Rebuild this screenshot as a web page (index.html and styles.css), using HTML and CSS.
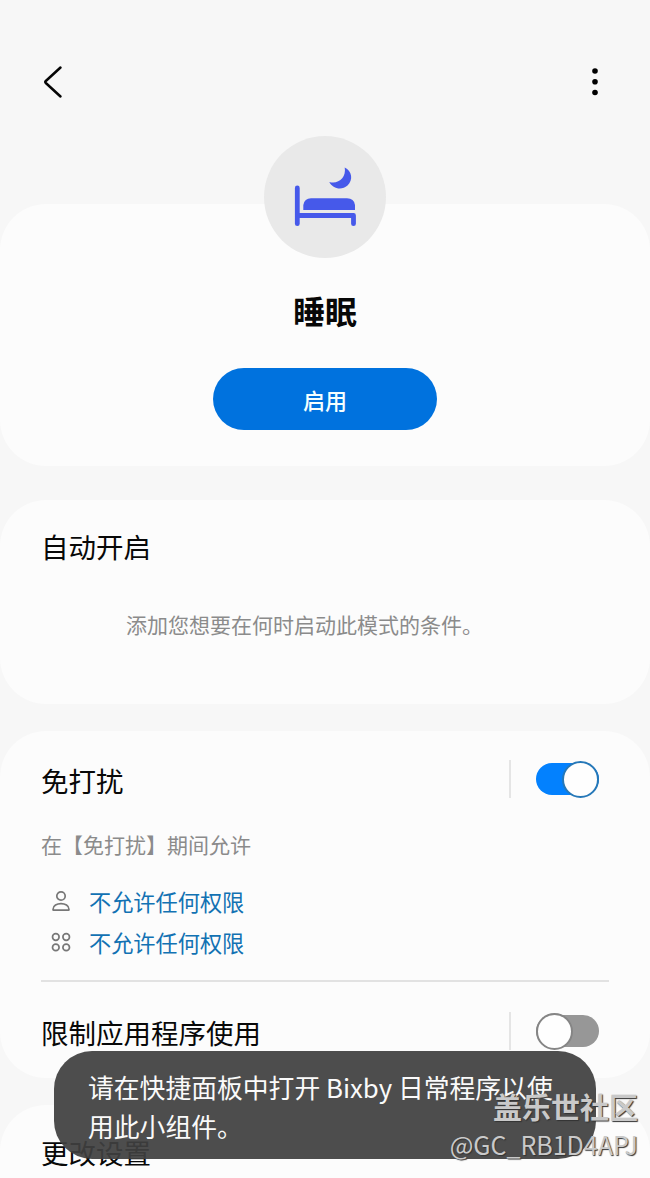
FILE: index.html
```html
<!DOCTYPE html>
<html lang="zh-CN">
<head>
<meta charset="utf-8">
<title>睡眠</title>
<link rel="stylesheet" href="styles.css">
</head>
<body>
<div class="screen">
  <header class="topbar">
    <svg class="back" width="24" height="36" viewBox="0 0 24 36"><path d="M18.500 3.500L3.800 17Q2.800 18 3.800 19L18.500 32.500" fill="none" stroke="#050505" stroke-width="2.500" stroke-linecap="round" stroke-linejoin="round"/></svg>
    <svg class="more" width="12" height="36" viewBox="0 0 12 36"><circle cx="6" cy="7" r="2.800"/><circle cx="6" cy="17.700" r="2.800"/><circle cx="6" cy="28.500" r="2.800"/></svg>
  </header>
  <main class="cards">
    <section class="card hero">
      <div class="badge">
        <svg width="122" height="122" viewBox="0 0 122 122" fill="#4659ea">
          <path d="M80.700 31.500C88 35 89.500 44 83.500 49.500C77.500 55 68.500 52.500 65.300 46C74.500 48.500 82.500 41.500 80.700 31.500Z"/>
          <path d="M39.300 74V69Q40.500 62.300 47 62.300H83Q90 62.300 91 69V74Z"/>
          <path d="M33.300 52V87.700M33.300 79.500H89.500V87.700" fill="none" stroke="#4659ea" stroke-width="4.800" stroke-linecap="round" stroke-linejoin="round"/>
        </svg>
      </div>
      <h1 class="title">睡眠</h1>
      <button class="enable">启用</button>
    </section>
    <section class="card auto">
      <h2 class="heading">自动开启</h2>
      <p class="hint">添加您想要在何时启动此模式的条件。</p>
    </section>
    <section class="card dnd">
      <div class="row">
        <h2 class="heading">免打扰</h2>
        <div class="control"><span class="switch on"></span></div>
      </div>
      <p class="caption">在【免打扰】期间允许</p>
      <ul class="permissions">
        <li class="permission">
          <svg width="22" height="24" viewBox="0 0 22 24"><circle cx="11" cy="7" r="4.200"/><path d="M3.500 21.200Q3 21.200 3 20.400C3 12.600 19 12.600 19 20.400Q19 21.200 18.500 21.200Z"/></svg>
          <span>不允许任何权限</span>
        </li>
        <li class="permission">
          <svg width="22" height="24" viewBox="0 0 22 24"><circle cx="5.800" cy="7" r="3.300"/><circle cx="16.200" cy="7" r="3.300"/><circle cx="5.800" cy="17.400" r="3.300"/><circle cx="16.200" cy="17.400" r="3.300"/></svg>
          <span>不允许任何权限</span>
        </li>
      </ul>
      <div class="row limit">
        <h2 class="heading">限制应用程序使用</h2>
        <div class="control"><span class="switch off"></span></div>
      </div>
    </section>
    <section class="card settings">
      <h2 class="heading">更改设置</h2>
    </section>
  </main>
  <div class="toast">请在快捷面板中打开 Bixby 日常程序以使用此小组件。</div>
  <div class="watermark">
    <div class="community">盖乐世社区</div>
    <div class="author">@GC_RB1D4APJ</div>
  </div>
</div>
</body>
</html>
```
FILE: styles.css
```css
*, *::before { box-sizing: border-box; }
body { margin: 0; background: #f7f7f7; }
h1, h2, p, ul { margin: 0; padding: 0; }

.screen {
  position: relative;
  width: 650px;
  height: 1178px;
  overflow: hidden;
  background: #f7f7f7;
  color: #080808;
  font-family: "Noto Sans CJK SC", sans-serif;
}

.topbar {
  height: 204px;
  padding: 64px 49px 0 42px;
  display: flex;
  justify-content: space-between;
  align-items: flex-start;
}
.back, .more { display: block; }

.cards { display: flex; flex-direction: column; }
.card { background: #fcfcfc; border-radius: 46px; }

.hero {
  height: 262px;
  margin-bottom: 34px;
  display: flex;
  flex-direction: column;
  align-items: center;
}
.badge {
  width: 122px;
  height: 122px;
  margin-top: -68px;
  border-radius: 50%;
  background: #e9e9e9;
}
.badge svg { display: block; }
.title {
  margin-top: 32px;
  font-size: 32px;
  line-height: 40px;
  font-weight: 700;
}
.enable {
  width: 224px;
  height: 62px;
  margin-top: 38px;
  padding: 0 0 1px;
  border: 0;
  border-radius: 31px;
  background: #0072de;
  color: #f4ffff;
  font: 500 22px/32px "Noto Sans CJK SC", sans-serif;
}

.heading { font-size: 27.500px; line-height: 40px; font-weight: 400; }
.auto { height: 204px; margin-bottom: 27px; padding: 26px 41px; }
.hint {
  margin: 42px 0 0 85px;
  font-size: 21px;
  line-height: 32px;
  color: #8b8b8b;
  white-space: nowrap;
}

.dnd { height: 347px; margin-bottom: 27px; padding: 29px 41px 0; }
.row { display: flex; justify-content: space-between; align-items: flex-start; }
.control {
  width: 100px;
  height: 38px;
  border-left: 2px solid #e5e5e5;
  padding-left: 25px;
}
.switch {
  display: flex;
  align-items: center;
  width: 63px;
  height: 32px;
  margin-top: 3px;
  border-radius: 16px;
}
.switch::before {
  content: "";
  flex: none;
  width: 37px;
  height: 37px;
  border-radius: 50%;
  background: #fefefe;
}
.on { justify-content: flex-end; background: #0381fe; }
.on::before { border: 2px solid #2678b8; }
.off { background: #979797; }
.off::before { border: 2px solid #858585; }

.caption { margin-top: 28px; font-size: 21px; line-height: 32px; color: #8b8b8b; }
.permissions { margin-top: 21px; list-style: none; }
.permission {
  display: flex;
  align-items: center;
  height: 41px;
  padding-left: 9px;
  gap: 17px;
  font-size: 22.200px;
  line-height: 32px;
  color: #1272b3;
}
.permission svg { fill: none; stroke: #777; stroke-width: 1.700; margin-bottom: 2px; }
.permission span { margin-bottom: 1px; }
.limit { margin-top: 17px; padding-top: 30px; border-top: 2px solid #e2e2e2; }

.settings { height: 220px; padding: 27px 41px; }

.toast {
  position: absolute;
  left: 54px;
  top: 1051px;
  width: 542px;
  height: 108px;
  padding: 16px 34px;
  border-radius: 38px;
  background: rgba(64, 64, 64, 0.93);
  color: #fafafa;
  font-size: 25.800px;
  line-height: 39px;
}
.watermark {
  position: absolute;
  right: 12px;
  top: 1086px;
  text-align: right;
  color: #c9c9c9;
  text-shadow: 1px 1px 1px #333;
}
.community { font-size: 29px; line-height: 40px; font-weight: 700; }
.author { font-size: 25px; line-height: 36px; }
```
